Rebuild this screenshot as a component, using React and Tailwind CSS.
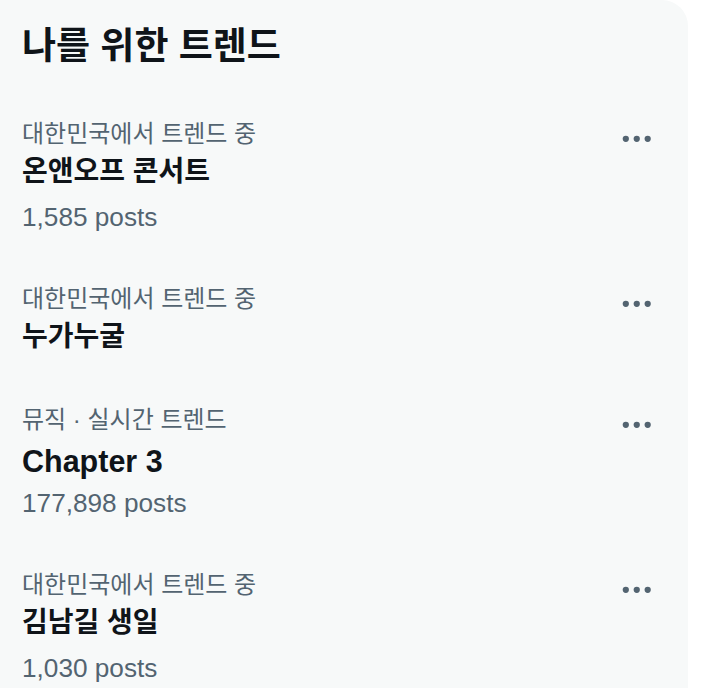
import React from "react";

const trends = [
  { meta: "대한민국에서 트렌드 중", name: "온앤오프 콘서트", posts: "1,585 posts", ko: true },
  { meta: "대한민국에서 트렌드 중", name: "누가누굴", posts: null, ko: true },
  { meta: "뮤직 · 실시간 트렌드", name: "Chapter 3", posts: "177,898 posts", ko: false },
  { meta: "대한민국에서 트렌드 중", name: "김남길 생일", posts: "1,030 posts", ko: true },
];

const font = { fontFamily: '"Liberation Sans", "Noto Sans CJK KR", sans-serif' };

// three-dot "more" caret
const MoreIcon = () => (
  <svg viewBox="0 0 24 24" className="w-[37.5px] h-[37.5px] fill-[#536471]">
    <circle cx="5" cy="12" r="2" />
    <circle cx="12" cy="12" r="2" />
    <circle cx="19" cy="12" r="2" />
  </svg>
);

const TrendRow = ({ trend }) => (
  <div className="flex items-start pl-[22px] pr-[33px] pt-[26px] pb-[19px]">
    <div className="flex-1 flex flex-col">
      <div className="h-[34px] leading-[34px] text-[24px] text-[#536471]">{trend.meta}</div>
      <div
        className={`h-[42px] leading-[42px] font-bold text-[#0f1419] ${
          trend.ko ? "text-[28px]" : "text-[30.5px] pt-[3px]"
        }`}
      >
        {trend.name}
      </div>
      {trend.posts && (
        <div className="mt-1 h-[40px] leading-[40px] text-[26.2px] text-[#536471]">{trend.posts}</div>
      )}
    </div>
    <div className="mt-[3px] shrink-0">
      <MoreIcon />
    </div>
  </div>
);

export default function App() {
  return (
    <div className="w-[708px] h-[688px] bg-white overflow-hidden" style={font}>
      <div className="w-[688px] min-h-full bg-[#f7f9f9] rounded-tr-[26px] flex flex-col">
        <h2 className="pl-[22px] pt-[23px] h-[91px] leading-[48px] text-[37px] font-bold text-[#0f1419]">
          나를 위한 트렌드
        </h2>
        {trends.map((t, i) => (
          <TrendRow key={i} trend={t} />
        ))}
      </div>
    </div>
  );
}
